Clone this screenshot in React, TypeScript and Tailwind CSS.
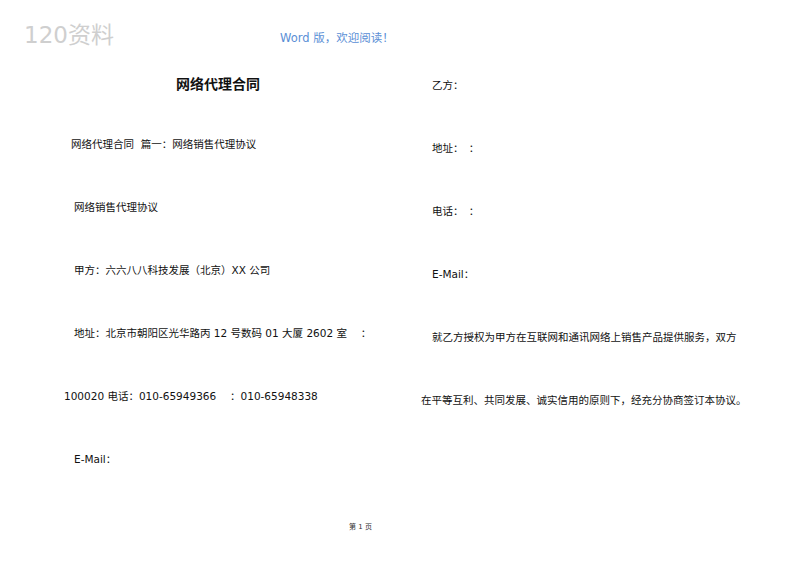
const font = { fontFamily: '"DejaVu Sans", "Noto Sans CJK SC", sans-serif' };

const left = [
  { text: "网络代理合同  篇一：网络销售代理协议", pad: "pl-[71px]" },
  { text: "网络销售代理协议", pad: "pl-[74px]" },
  { text: "甲方：六六八八科技发展（北京）XX 公司", pad: "pl-[74px]" },
  { text: "地址：北京市朝阳区光华路丙 12 号数码 01 大厦 2602 室　 ：", pad: "pl-[74px]" },
  { text: "100020 电话：010-65949366　 ：010-65948338", pad: "pl-[64px]" },
  { text: "E-Mail：", pad: "pl-[74px]" },
];

const right = [
  { text: "乙方：", pad: "pl-[32px]" },
  { text: "地址：　：", pad: "pl-[32px]" },
  { text: "电话：　：", pad: "pl-[32px]" },
  { text: "E-Mail：", pad: "pl-[32px]" },
  { text: "就乙方授权为甲方在互联网和通讯网络上销售产品提供服务，双方", pad: "pl-[32px]" },
  { text: "在平等互利、共同发展、诚实信用的原则下，经充分协商签订本协议。", pad: "pl-[21px]" },
];

export default function App() {
  return (
    <div className="relative w-[800px] h-[565px] bg-white overflow-hidden text-[#111]" style={font}>
      <div className="absolute left-[24px] top-[18px] text-[23px] text-[#cfcfcf]">120资料</div>
      <div className="absolute left-[280px] top-[30px] text-[11.5px] text-[#5b8fd6]">Word 版，欢迎阅读！</div>
      <div className="flex pt-[74px]">
        <div className="w-[400px] flex flex-col">
          <div className="h-[62px] pl-[176px] text-[14px] font-bold leading-[20px]">网络代理合同</div>
          {left.map((l, i) => (
            <div key={i} className={`h-[63px] text-[10.5px] leading-[16px] whitespace-pre ${l.pad}`}>{l.text}</div>
          ))}
        </div>
        <div className="flex flex-col pt-[3px]">
          {right.map((l, i) => (
            <div key={i} className={`h-[63px] text-[10.5px] leading-[16px] whitespace-pre ${l.pad}`}>{l.text}</div>
          ))}
        </div>
      </div>
      <div className="absolute left-[349px] top-[522px] text-[7px] text-[#333]">第 1 页</div>
    </div>
  );
}
